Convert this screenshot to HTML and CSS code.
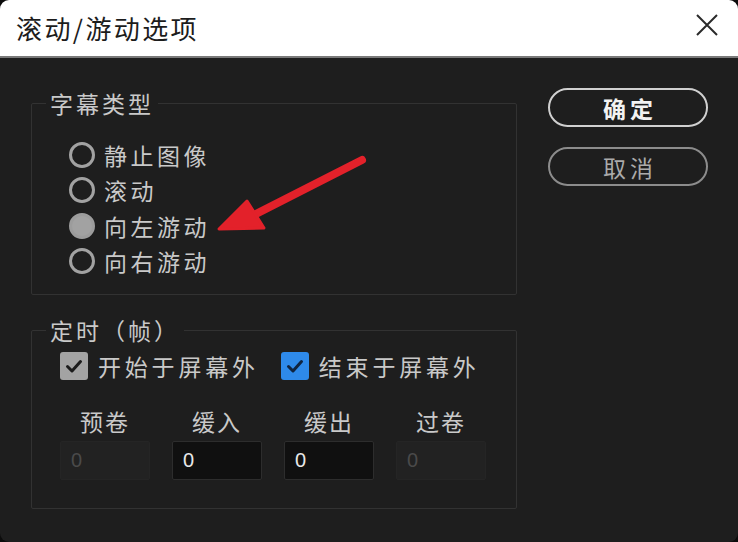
FILE: index.html
```html
<!DOCTYPE html>
<html lang="zh-CN">
<head>
<meta charset="utf-8">
<title>滚动/游动选项</title>
<link rel="stylesheet" href="styles.css">
</head>
<body>
<div class="window">
  <div class="titlebar">
    <span class="title">滚动/游动选项</span>
    <svg class="close" width="22" height="22" viewBox="0 0 22 22"><path d="M1 1 L21 21 M21 1 L1 21" stroke="#2a2a2a" stroke-width="2" fill="none"/></svg>
  </div>
  <div class="content">
    <div class="left">
      <fieldset class="group group-type">
        <legend>字幕类型</legend>
        <div class="radio-list">
          <div class="radio"><span class="dot"></span><span>静止图像</span></div>
          <div class="radio"><span class="dot"></span><span>滚动</span></div>
          <div class="radio"><span class="dot on"></span><span>向左游动</span></div>
          <div class="radio"><span class="dot"></span><span>向右游动</span></div>
        </div>
      </fieldset>
      <fieldset class="group group-timing">
        <legend>定时（帧）</legend>
        <div class="checks">
          <div class="check"><span class="box gray"><svg width="28" height="28" viewBox="0 0 28 28"><path d="M7.5 14.5 L12 19 L20.5 9.5" stroke="#1b1b1b" stroke-width="3" fill="none" stroke-linecap="round" stroke-linejoin="round"/></svg></span><span>开始于屏幕外</span></div>
          <div class="check"><span class="box blue"><svg width="28" height="28" viewBox="0 0 28 28"><path d="M7.5 14.5 L12 19 L20.5 9.5" stroke="#0f2440" stroke-width="3" fill="none" stroke-linecap="round" stroke-linejoin="round"/></svg></span><span>结束于屏幕外</span></div>
        </div>
        <div class="fields">
          <div class="field"><span class="flabel">预卷</span><div class="input disabled">0</div></div>
          <div class="field"><span class="flabel">缓入</span><div class="input">0</div></div>
          <div class="field"><span class="flabel">缓出</span><div class="input">0</div></div>
          <div class="field"><span class="flabel">过卷</span><div class="input disabled">0</div></div>
        </div>
      </fieldset>
    </div>
    <div class="buttons">
      <div class="btn primary">确定</div>
      <div class="btn secondary">取消</div>
    </div>
  </div>
  <svg class="arrow" width="165" height="90" viewBox="0 0 165 90">
    <line x1="152" y1="10" x2="44" y2="65" stroke="#e3212a" stroke-width="8" stroke-linecap="round"/>
    <polygon points="9,79 37,51 54,78" fill="#e3212a" stroke="#e3212a" stroke-width="3" stroke-linejoin="round"/>
  </svg>
</div>
</body>
</html>
```
FILE: styles.css
```css
html { background: #0c0c0c; }
body { margin: 0; font-family: "Noto Sans CJK SC", "Noto Sans", sans-serif; }
.window {
  position: relative;
  width: 738px;
  height: 542px;
  background: #1e1e1e;
  border-radius: 9px;
  overflow: hidden;
}
.titlebar {
  height: 56px;
  background: #ffffff;
  border-bottom: 2px solid #7a7a7a;
  display: flex;
  align-items: center;
  justify-content: space-between;
  padding: 0 20px 0 16px;
}
.title {
  font-size: 26px;
  letter-spacing: 2.4px;
  color: #1c1c1c;
  line-height: 30px;
}
.close { margin-top: -6px; }
.content {
  display: flex;
  gap: 31px;
  padding: 30px 0 0 31px;
  align-items: flex-start;
}
.left {
  width: 486px;
  display: flex;
  flex-direction: column;
  gap: 20px;
}
.group {
  margin: 0;
  border: 1px solid #323232;
  border-radius: 2px;
  padding: 0 14px;
  min-width: 0;
}
.group legend {
  padding: 0 4px;
  font-size: 23px;
  line-height: 30px;
  letter-spacing: 3px;
  color: #c9c9c9;
}
.radio-list {
  display: flex;
  flex-direction: column;
  padding: 19px 0 15px 23px;
}
.radio {
  display: flex;
  align-items: center;
  gap: 9px;
  height: 35.5px;
  font-size: 23px;
  letter-spacing: 3.5px;
  color: #c9c9c9;
}
.dot {
  width: 20px;
  height: 20px;
  border: 3.5px solid #a2a2a2;
  border-radius: 50%;
  flex: none;
}
.dot.on { background: #a2a2a2; border-color: #9c9c9c; }
.checks {
  display: flex;
  gap: 22px;
  padding: 7px 0 0 14px;
}
.check {
  display: flex;
  align-items: center;
  gap: 10px;
  font-size: 23px;
  letter-spacing: 3.8px;
  color: #c9c9c9;
  height: 28px;
}
.box {
  width: 28px;
  height: 28px;
  border-radius: 3px;
  display: flex;
  flex: none;
}
.box.gray { background: #a3a3a3; }
.box.blue { background: #2e8aea; }
.fields {
  display: grid;
  grid-template-columns: repeat(4, 90px);
  column-gap: 22px;
  padding: 26px 0 28px 14px;
}
.field {
  display: flex;
  flex-direction: column;
  align-items: center;
  gap: 5px;
}
.flabel {
  font-size: 23px;
  line-height: 30px;
  letter-spacing: 2px;
  color: #c9c9c9;
}
.input {
  box-sizing: border-box;
  width: 90px;
  height: 39px;
  background: #101010;
  border: 1px solid #2d2d2d;
  border-radius: 2px;
  color: #e8e8e8;
  font-family: "Liberation Sans", "Noto Sans", sans-serif;
  font-size: 20px;
  line-height: 37px;
  padding-left: 10px;
}
.input.disabled {
  background: #222222;
  border-color: #252525;
  color: #4a4a4a;
}
.buttons {
  display: flex;
  flex-direction: column;
  gap: 20px;
}
.btn {
  box-sizing: border-box;
  width: 160px;
  height: 39px;
  border-radius: 20px;
  display: flex;
  align-items: center;
  justify-content: center;
  font-size: 23px;
  letter-spacing: 4px;
  padding-left: 4px;
}
.btn.primary {
  border: 2px solid #d0d0d0;
  color: #f2f2f2;
  font-weight: 700;
}
.btn.secondary {
  border: 2px solid #8c8c8c;
  color: #ababab;
}
.arrow {
  position: absolute;
  left: 210px;
  top: 150px;
}
```
